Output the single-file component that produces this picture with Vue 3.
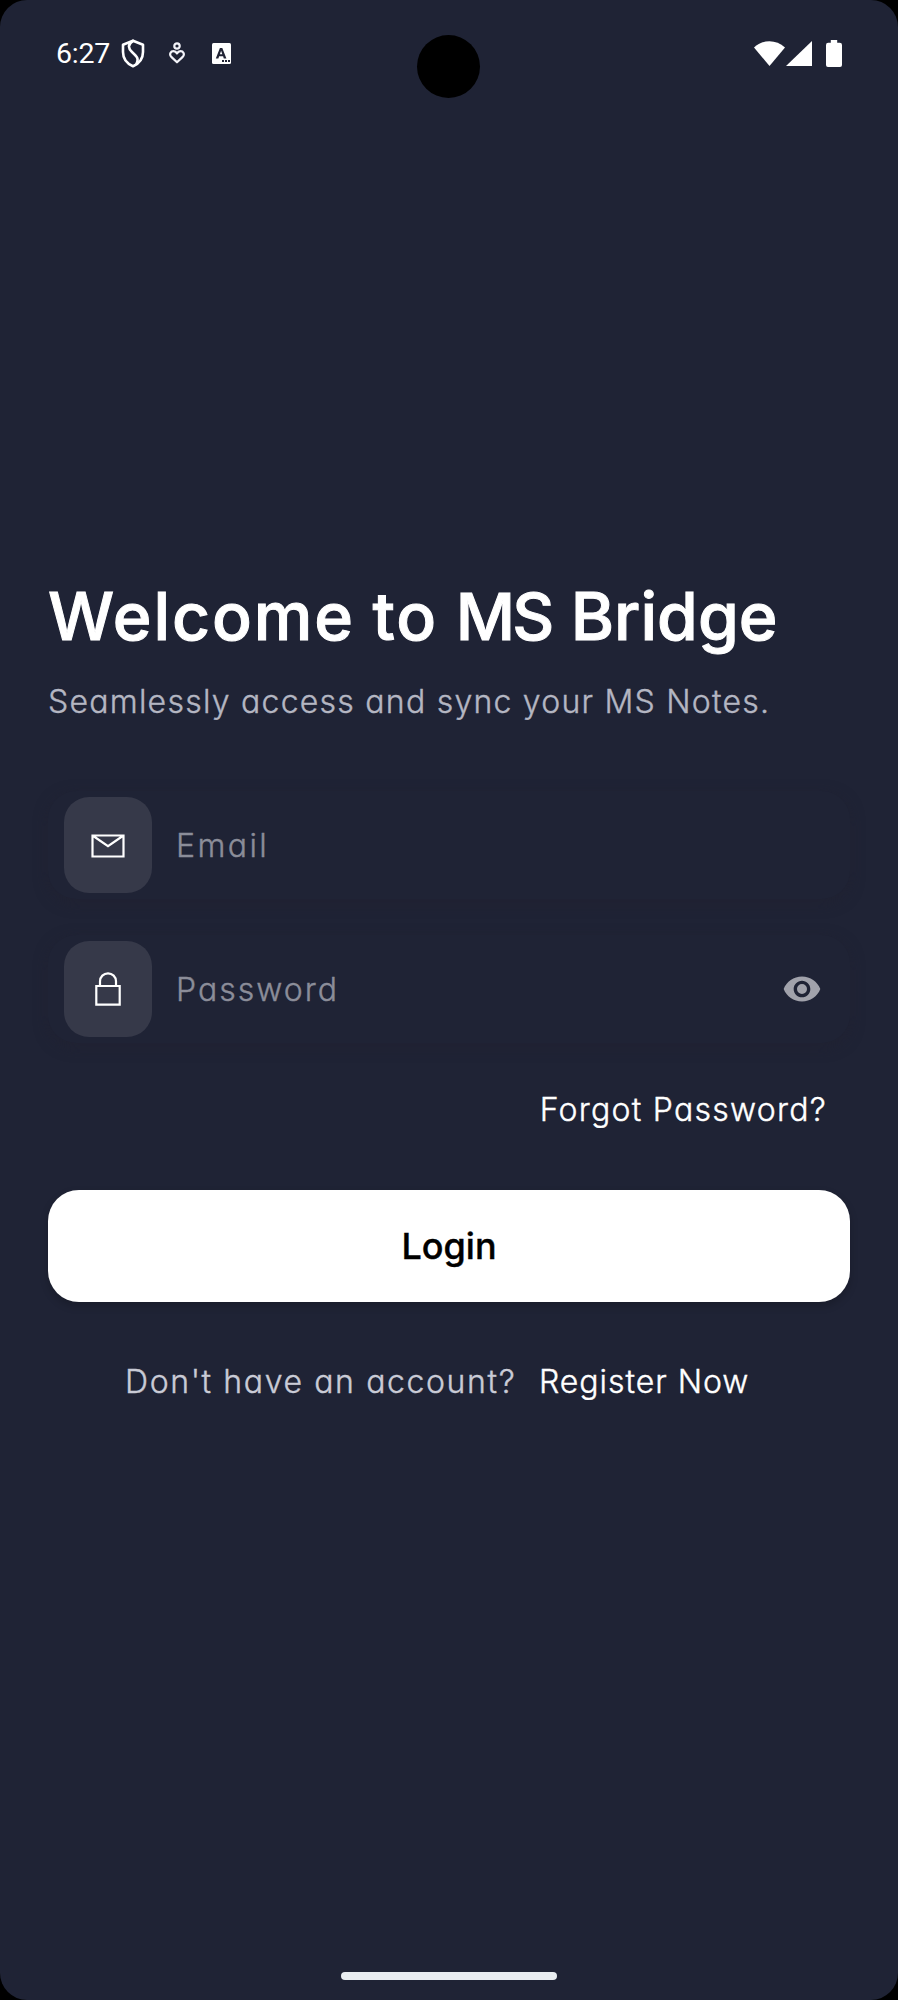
<script setup>
import { ref } from 'vue'

const email = ref('')
const password = ref('')
</script>

<template>
  <div class="device">
    <main class="screen">
      <header class="status">
        <span class="time">6:27</span>
        <svg class="shield" viewBox="0 0 24 29" fill="none" stroke="#fff" stroke-width="2.6" stroke-linejoin="round" stroke-linecap="round">
          <path d="M12 1.800 22 5.700v7.200c0 6-3.800 11.500-10 14.300C5.800 24.400 2 18.900 2 12.900V5.700z" />
          <path d="M12 1.800C6.500 5.500 7 9.200 11 13c5 4.600 7 6.500 4.600 11.600" />
        </svg>
        <svg class="care" viewBox="0 0 16 22" fill="none" stroke="#f4f4fa" stroke-width="2.2" stroke-linejoin="round">
          <circle cx="8" cy="4" r="2.700" />
          <path d="M8 20.300 2.300 14.900C-.200 12 1.800 9.200 4.500 9.200c1.600 0 2.700.700 3.500 2.200.800-1.500 1.900-2.200 3.500-2.200 2.700 0 4.700 2.800 2.200 5.700z" />
        </svg>
        <svg class="letter" viewBox="0 0 19 21">
          <rect width="19" height="21" rx="1.500" fill="#fff" />
          <path d="M7.900 5h2.400l4.100 10.400h-2.600l-.700-2.100H7.100l-.700 2.100H3.800zM9.100 7.700l-1.200 3.500h2.400z" fill="#202334" />
          <path d="M10 17h2v2h-2zM13 17h2v2h-2zM16 17h2v2h-2z" fill="#202334" />
        </svg>
        <span class="spacer"></span>
        <svg class="wifi" viewBox="0 0 31 25"><path d="M0 6.500C9-2 22-2 31 6.500L15.500 25z" fill="#fff" /></svg>
        <svg class="signal" viewBox="0 0 26 25"><path d="M26 0v25H0z" fill="#fff" /></svg>
        <svg class="battery" viewBox="0 0 16 27"><path d="M4.800 0h6.400v2.700h2.600A2.200 2.200 0 0 1 16 4.900v20a2 2 0 0 1-2 2H2a2 2 0 0 1-2-2v-20a2.200 2.200 0 0 1 2.200-2.200h2.600z" fill="#fff" /></svg>
        <i class="camera"></i>
      </header>

      <form class="login" @submit.prevent>
        <h1><span class="w1">Welcome</span> <span class="w2">to</span> <span class="w3">MS</span> <span class="w4">Bridge</span></h1>
        <p class="lead">Seamlessly access and sync your MS Notes.</p>

        <label class="field">
          <span class="tile">
            <svg class="mail" viewBox="0 0 34 24" fill="none" stroke="#fff" stroke-width="2.200">
              <path d="M1.500 1.500h31v21h-31zM1.500 1.500 17 12.200 32.500 1.500" />
            </svg>
          </span>
          <input v-model="email" class="email" type="text" placeholder="Email" />
        </label>

        <label class="field">
          <span class="tile">
            <svg class="lock" viewBox="0 0 26 34" fill="none" stroke="#fff" stroke-width="2.200">
              <path d="M1.300 14h23.400v18.700H1.300zM5 14V9.300a8 8 0 0 1 16 0V14" />
            </svg>
          </span>
          <input v-model="password" class="password" type="password" placeholder="Password" />
          <svg class="eye" viewBox="0 0 24 24" fill="#a1a2ab">
            <path d="M12 4.500C7 4.500 2.730 7.610 1 12c1.730 4.390 6 7.500 11 7.500s9.270-3.110 11-7.500c-1.730-4.390-6-7.500-11-7.500M12 17c-2.760 0-5-2.240-5-5s2.240-5 5-5 5 2.240 5 5-2.240 5-5 5m0-8a3 3 0 1 0 0 6 3 3 0 0 0 0-6" />
          </svg>
        </label>

        <a class="forgot">Forgot Password?</a>
        <button class="submit">Login</button>
        <p class="register"><span class="ask">Don't have an account?</span><a class="join">Register Now</a></p>
      </form>

      <i class="home"></i>
    </main>
  </div>
</template>

<style>
body { margin: 0; background: #000; }
</style>

<style scoped>
.device { width: 898px; height: 2000px; background: #000; }
.screen {
  box-sizing: border-box;
  display: flex;
  flex-direction: column;
  height: 2000px;
  border-radius: 27px;
  background: #1f2335;
  color: #fff;
  font-family: Inter, "Liberation Sans", sans-serif;
  font-feature-settings: "cv11";
  font-size: 32px;
  font-weight: 300;
}
.status {
  position: relative;
  box-sizing: border-box;
  display: flex;
  align-items: center;
  height: 106px;
  padding: 0 56px;
}
.time { width: 65px; padding-top: 1px; font: 28.500px/34px Roboto, sans-serif; letter-spacing: -0.200px; }
.shield { width: 24px; height: 29px; }
.care { width: 16px; height: 22px; margin-left: 24px; }
.letter { width: 19px; height: 21px; margin-left: 27px; }
.spacer { flex: 1; }
.wifi { width: 31px; height: 25px; }
.signal { width: 26px; height: 25px; margin-left: 1px; }
.battery { width: 16px; height: 27px; margin-left: 14px; }
.camera {
  position: absolute;
  left: 417px;
  top: 35px;
  width: 63px;
  height: 63px;
  border-radius: 50%;
  background: #000;
}
.login {
  display: flex;
  flex-direction: column;
  padding: 464px 48px 0;
  -webkit-text-stroke: 0.400px currentColor;
}
h1, p { margin: 0; white-space: nowrap; }
h1 { height: 92px; font-size: 66px; font-weight: 500; line-height: 92px; -webkit-text-stroke-width: 1px; }
.w1 { letter-spacing: 1.900px; }
.w2 { letter-spacing: 2px; }
.w3 { font-size: 65px; letter-spacing: -3px; margin-right: 2px; }
.w4 { letter-spacing: 0; }
.lead { height: 48px; margin-top: 16px; line-height: 48px; letter-spacing: 1.240px; color: #b4b6c2; }
.field {
  box-sizing: border-box;
  display: flex;
  align-items: center;
  height: 108px;
  margin-top: 36px;
  padding: 6px 24px 6px 16px;
  border-radius: 28px;
  background: #1f2335;
  box-shadow: 0 4px 14px rgba(34, 33, 48, 0.6);
}
.lead + .field { margin-top: 65px; }
.tile {
  display: flex;
  flex: none;
  align-items: center;
  justify-content: center;
  width: 88px;
  height: 96px;
  border-radius: 25px;
  background: #363949;
}
.mail { width: 34px; height: 24px; margin-top: 2px; }
.lock { width: 26px; height: 34px; }
input {
  flex: 1;
  min-width: 0;
  height: 60px;
  margin: 2px 0 0 24px;
  padding: 0;
  border: 0;
  outline: 0;
  background: none;
  color: #fff;
  font: 300 32px/60px Inter, "Liberation Sans", sans-serif;
  font-feature-settings: "cv11";
  letter-spacing: 2px;
}
input::placeholder { color: #8b8d99; opacity: 1; -webkit-text-stroke: 0.400px #8b8d99; }
.email { letter-spacing: 2.400px; }
.eye { width: 40px; height: 40px; margin-right: 4px; }
.forgot { align-self: flex-end; margin: 43px 23px 0 0; line-height: 48px; letter-spacing: 1.250px; }
.submit {
  height: 112px;
  margin-top: 56px;
  padding: 0;
  border: 0;
  border-radius: 31px;
  background: #fff;
  box-shadow: 0 4px 8px rgba(0, 0, 0, 0.2);
  color: #000;
  font: 500 36px/112px Inter, "Liberation Sans", sans-serif;
}
.register { display: flex; margin: 56px 0 0 77px; line-height: 48px; }
.ask { width: 414px; letter-spacing: 1.610px; color: #c9cbd6; }
.join { letter-spacing: 0.970px; }
.home {
  width: 216px;
  height: 8px;
  margin: auto auto 20px;
  border-radius: 4px;
  background: #e9edf1;
}
</style>
